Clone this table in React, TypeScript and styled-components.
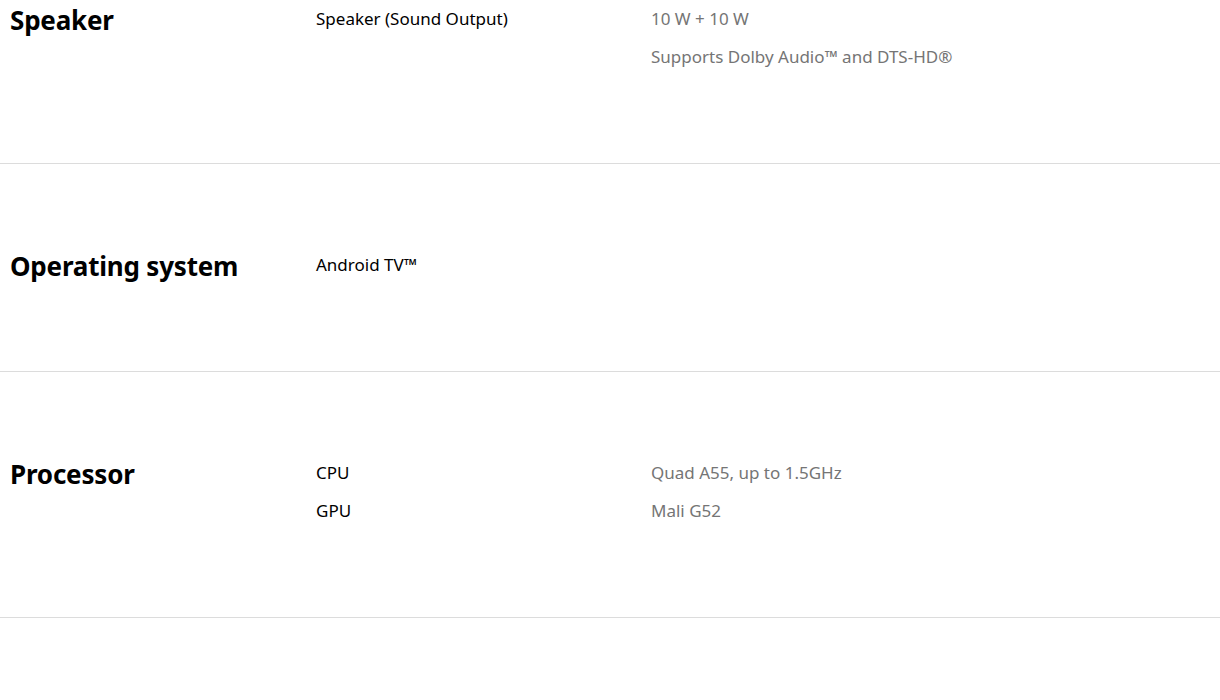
import React from "react";
import styled, { createGlobalStyle } from "styled-components";

const GlobalStyle = createGlobalStyle`
  html, body {
    margin: 0;
    padding: 0;
    background: #ffffff;
  }
  body {
    font-family: "Noto Sans", "Open Sans", sans-serif;
    color: #000000;
    overflow: hidden;
  }
`;

const Page = styled.div`
  width: 1220px;
  margin-top: -1px;
`;

const Section = styled.section<{ first?: boolean }>`
  display: grid;
  grid-template-columns: 306px 1fr;
  align-items: start;
  padding: ${(p) => (p.first ? "0" : "81px")} 0 88px 10px;
  border-bottom: 1px solid #dcdcdc;
`;

const Title = styled.h2`
  margin: 0 0 -4px;
  font-size: 26px;
  font-weight: 700;
  line-height: 42px;
  letter-spacing: -0.2px;
`;

const Rows = styled.div`
  display: flex;
  flex-direction: column;
`;

const Row = styled.div`
  display: grid;
  grid-template-columns: 335px 1fr;
  height: 38px;
  align-items: center;
`;

const Label = styled.div`
  font-size: 17px;
  font-weight: 400;
  color: #000000;
`;

const Value = styled.div`
  font-size: 17px;
  color: #757575;
`;

interface Spec {
  title: string;
  rows: { label?: string; value?: string }[];
}

const specs: Spec[] = [
  {
    title: "Speaker",
    rows: [
      { label: "Speaker (Sound Output)", value: "10 W + 10 W" },
      { value: "Supports Dolby Audio™ and DTS-HD®" },
    ],
  },
  {
    title: "Operating system",
    rows: [{ label: "Android TV™" }],
  },
  {
    title: "Processor",
    rows: [
      { label: "CPU", value: "Quad A55, up to 1.5GHz" },
      { label: "GPU", value: "Mali G52" },
    ],
  },
];

export default function App() {
  return (
    <>
      <GlobalStyle />
      <Page>
        {specs.map((s, i) => (
          <Section key={s.title} first={i === 0}>
            <Title>{s.title}</Title>
            <Rows>
              {s.rows.map((r, j) => (
                <Row key={j}>
                  <Label>{r.label}</Label>
                  <Value>{r.value}</Value>
                </Row>
              ))}
            </Rows>
          </Section>
        ))}
      </Page>
    </>
  );
}
